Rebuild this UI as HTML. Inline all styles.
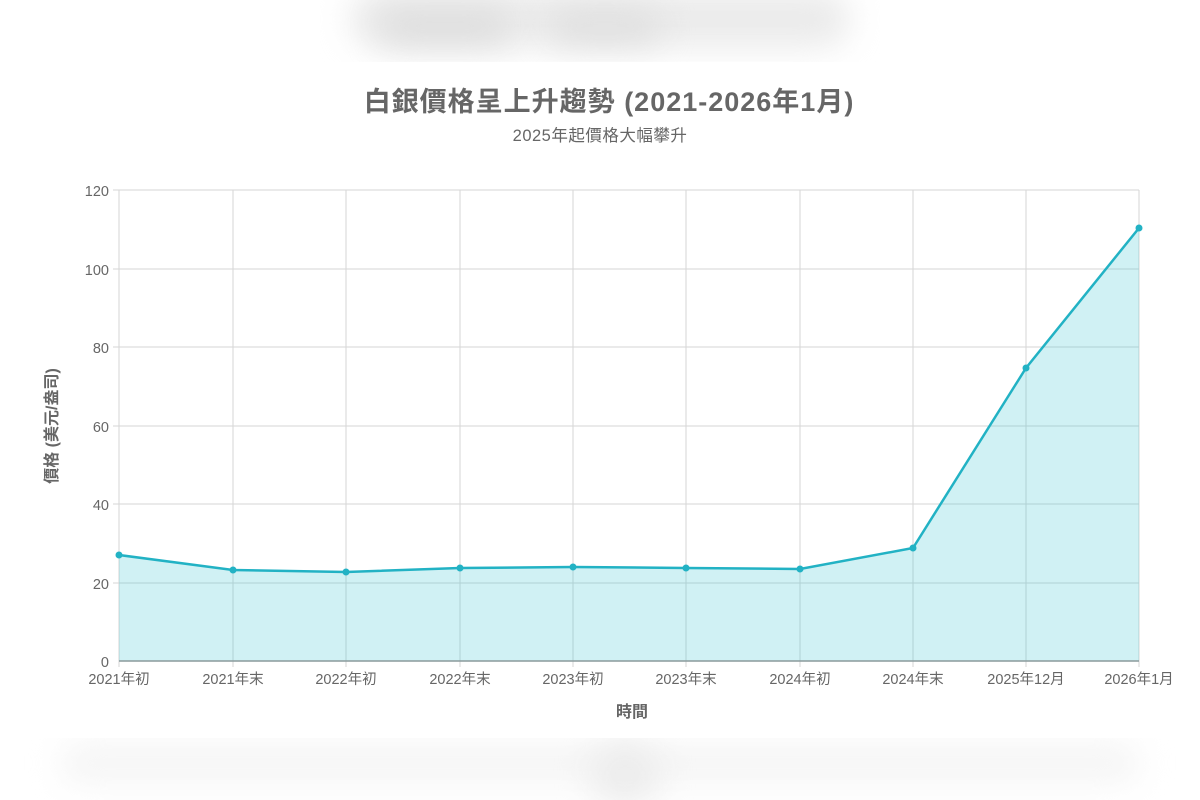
<!DOCTYPE html>
<html><head><meta charset="utf-8"><style>
body{margin:0;width:1200px;height:800px;background:#fff;overflow:hidden;position:relative;font-family:"Liberation Sans","Noto Sans CJK TC",sans-serif}
.b{position:absolute;filter:blur(16px);border-radius:30px}
</style></head><body>
<div style="position:absolute;left:320px;top:0;width:560px;height:62px;overflow:hidden">
<div class="b" style="left:30px;top:-10px;width:500px;height:58px;background:#ebebeb"></div>
<div class="b" style="left:60px;top:8px;width:130px;height:36px;background:#dedede"></div>
<div class="b" style="left:230px;top:8px;width:110px;height:36px;background:#e0e0e0"></div>
</div>
<div style="position:absolute;left:0;top:738px;width:1200px;height:62px;overflow:hidden">
<div class="b" style="left:60px;top:5px;width:1080px;height:40px;background:#f5f5f5"></div>
<div class="b" style="left:590px;top:5px;width:70px;height:60px;background:#ececec"></div>
</div>
<svg width="1200" height="800" style="position:absolute;left:0;top:0" font-family="Liberation Sans, Noto Sans CJK TC, sans-serif">
<text x="609" y="111" text-anchor="middle" font-size="27" font-weight="bold" fill="#666" letter-spacing="1">白銀價格呈上升趨勢 (2021-2026年1月)</text>
<text x="600" y="141" text-anchor="middle" font-size="16.5" fill="#666" letter-spacing="0.5">2025年起價格大幅攀升</text>
<g stroke="#d6d6d6" stroke-width="1">
<line x1="113" y1="190" x2="1139" y2="190"/><line x1="113" y1="269" x2="1139" y2="269"/><line x1="113" y1="347" x2="1139" y2="347"/><line x1="113" y1="426" x2="1139" y2="426"/><line x1="113" y1="504" x2="1139" y2="504"/><line x1="113" y1="583" x2="1139" y2="583"/>
<line x1="119" y1="190" x2="119" y2="667"/><line x1="233" y1="190" x2="233" y2="667"/><line x1="346" y1="190" x2="346" y2="667"/><line x1="460" y1="190" x2="460" y2="667"/><line x1="573" y1="190" x2="573" y2="667"/><line x1="686" y1="190" x2="686" y2="667"/><line x1="800" y1="190" x2="800" y2="667"/><line x1="913" y1="190" x2="913" y2="667"/><line x1="1026" y1="190" x2="1026" y2="667"/><line x1="1139" y1="190" x2="1139" y2="667"/>
</g>
<polygon points="119,555 233,570 346,572 460,568 573,567 686,568 800,569 913,548 1026,368 1139,228 1139,661 119,661" fill="rgba(40,190,205,0.22)"/>
<polyline points="119,555 233,570 346,572 460,568 573,567 686,568 800,569 913,548 1026,368 1139,228" fill="none" stroke="#22b2c4" stroke-width="2.5"/>
<g fill="#22b2c4"><circle cx="119" cy="555" r="3.5"/><circle cx="233" cy="570" r="3.5"/><circle cx="346" cy="572" r="3.5"/><circle cx="460" cy="568" r="3.5"/><circle cx="573" cy="567" r="3.5"/><circle cx="686" cy="568" r="3.5"/><circle cx="800" cy="569" r="3.5"/><circle cx="913" cy="548" r="3.5"/><circle cx="1026" cy="368" r="3.5"/><circle cx="1139" cy="228" r="3.5"/></g>
<line x1="119" y1="661" x2="1139" y2="661" stroke="#8a9a9c" stroke-width="1.5"/>
<g font-size="14.5" fill="#666" text-anchor="end">
<text x="109" y="196">120</text><text x="109" y="275">100</text><text x="109" y="353">80</text><text x="109" y="432">60</text><text x="109" y="510">40</text><text x="109" y="589">20</text><text x="109" y="667">0</text></g>
<g font-size="14.5" fill="#666" text-anchor="middle">
<text x="119" y="684">2021年初</text><text x="233" y="684">2021年末</text><text x="346" y="684">2022年初</text><text x="460" y="684">2022年末</text><text x="573" y="684">2023年初</text><text x="686" y="684">2023年末</text><text x="800" y="684">2024年初</text><text x="913" y="684">2024年末</text><text x="1026" y="684">2025年12月</text><text x="1139" y="684">2026年1月</text></g>
<text x="632" y="717" text-anchor="middle" font-size="16" font-weight="bold" fill="#666">時間</text>
<text transform="translate(57,426) rotate(-90)" text-anchor="middle" font-size="16" font-weight="bold" fill="#666">價格 (美元/盎司)</text>
</svg>
</body></html>
